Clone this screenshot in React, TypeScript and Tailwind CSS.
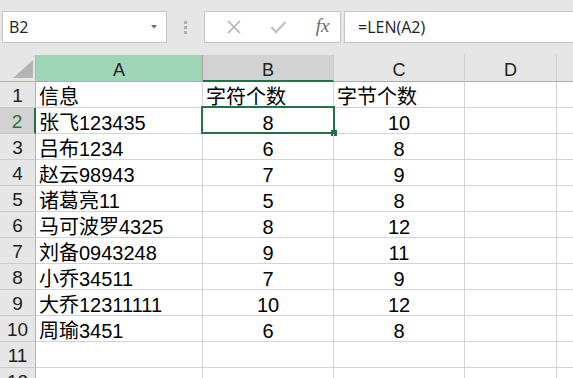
import React from "react";

const rows: [string, string, string][] = [
  ["信息", "字符个数", "字节个数"],
  ["张飞123435", "8", "10"],
  ["吕布1234", "6", "8"],
  ["赵云98943", "7", "9"],
  ["诸葛亮11", "5", "8"],
  ["马可波罗4325", "8", "12"],
  ["刘备0943248", "9", "11"],
  ["小乔34511", "7", "9"],
  ["大乔12311111", "10", "12"],
  ["周瑜3451", "6", "8"],
  ["", "", ""],
  ["", "", ""],
];

const cellFont = { fontFamily: '"Liberation Sans", "Noto Sans CJK SC", sans-serif' };

export default function App() {
  return (
    <div className="w-[573px] h-[378px] overflow-hidden bg-white relative">
      {/* Formula bar */}
      <div className="h-[55px] bg-[#e6e6e6] flex items-start pt-[11px] pl-[2px]">
        <div
          className="w-[165px] h-[32px] bg-white border border-[#c6c6c6] flex items-center justify-between pl-[6px] pr-[9px] text-[16px] text-[#222]"
          style={{ fontFamily: '"Open Sans", sans-serif' }}
        >
          <span>B2</span>
          <svg width="6" height="4" viewBox="0 0 6 4">
            <path d="M0 0 L6 0 L3 3.5 Z" fill="#6a6a6a" />
          </svg>
        </div>
        <div className="w-[37px] h-[32px] flex flex-col items-center justify-center gap-[2px]">
          <div className="w-[3px] h-[3px] bg-[#b0b0b0]" />
          <div className="w-[3px] h-[3px] bg-[#b0b0b0]" />
          <div className="w-[3px] h-[3px] bg-[#b0b0b0]" />
        </div>
        <div className="w-[137px] h-[32px] bg-white border border-[#c6c6c6] flex items-center">
          <div className="w-[45px] flex justify-center pl-[12px]">
            <svg width="16" height="16" viewBox="0 0 16 16">
              <path d="M2 2 L14 14 M14 2 L2 14" stroke="#b3b3b3" strokeWidth="1.6" />
            </svg>
          </div>
          <div className="w-[45px] flex justify-center pl-[12px]">
            <svg width="17" height="14" viewBox="0 0 17 14">
              <path d="M1.5 7 L6 12 L15.5 2" stroke="#c2c2c2" strokeWidth="2.4" fill="none" />
            </svg>
          </div>
          <div
            className="flex-1 flex justify-center pl-[10px] text-[19px] italic text-[#6b6b6b] leading-none pb-[3px]"
            style={{ fontFamily: '"Liberation Serif", serif' }}
          >
            fx
          </div>
        </div>
        <div
          className="flex-1 h-[32px] ml-[3px] bg-white border border-r-0 border-[#c6c6c6] flex items-center pl-[13px] text-[16px] text-[#222]"
          style={{ fontFamily: '"Open Sans", sans-serif' }}
        >
          =LEN(A2)
        </div>
      </div>

      {/* Grid */}
      <div className="grid grid-cols-[36px_167px_131px_131px_92px_1fr]" style={cellFont}>
        {/* header row */}
        <div className="h-[27px] bg-[#e6e6e6] border-r border-b border-[#b4b4b4] relative">
          <svg className="absolute left-[13px] top-[5px]" width="20" height="18" viewBox="0 0 20 18">
            <path d="M20 0 L20 18 L0 18 Z" fill="#b4b4b4" />
          </svg>
        </div>
        <div className="h-[27px] bg-[#9fd5b7] border-r border-b border-r-[#a6a6a6] border-b-[#adadad] flex items-end justify-center pb-[2px] text-[18px] leading-[18px] text-[#222]">
          A
        </div>
        <div className="h-[27px] bg-[#d2d2d2] border-r border-b-2 border-r-[#c8c8c8] border-b-[#217346] flex items-end justify-center pb-[1px] text-[18px] leading-[18px] text-[#222]">
          B
        </div>
        <div className="h-[27px] bg-[#e6e6e6] border-r border-b border-r-[#cfcfcf] border-b-[#adadad] flex items-end justify-center pb-[2px] text-[18px] leading-[18px] text-[#222]">
          C
        </div>
        <div className="h-[27px] bg-[#e6e6e6] border-r border-b border-r-[#cfcfcf] border-b-[#adadad] flex items-end justify-center pb-[2px] text-[18px] leading-[18px] text-[#222]">
          D
        </div>
        <div className="h-[27px] bg-[#e6e6e6] border-b border-b-[#adadad]" />

        {rows.map((r, i) => {
          const n = i + 1;
          const sel = n === 2;
          return (
            <React.Fragment key={n}>
              <div
                className={
                  sel
                    ? "h-[26px] bg-[#d2d2d2] border-r-2 border-b border-r-[#217346] border-b-[#c8c8c8] flex items-end justify-center text-[19px] leading-[19px] text-[#217346] pb-[2px]"
                    : "h-[26px] bg-[#e6e6e6] border-r border-b border-r-[#b4b4b4] border-b-[#cdcdcd] flex items-end justify-center text-[19px] leading-[19px] text-[#222] pb-[2px]"
                }
              >
                {n}
              </div>
              <div className="h-[26px] border-r border-b border-[#d4d4d4] flex items-end pl-[3px] text-[20px] leading-[20px] text-black whitespace-nowrap">
                {r[0]}
              </div>
              <div
                className={
                  (n === 1 ? "justify-start pl-[3px] " : "justify-center ") +
                  "h-[26px] border-r border-b border-[#d4d4d4] flex items-end text-[20px] leading-[20px] text-black whitespace-nowrap relative"
                }
              >
                {r[1]}
                {sel && (
                  <>
                    <div className="absolute left-[-2px] right-[-2px] top-[-2px] bottom-[-1px] border-2 border-[#217346]" />
                    <div className="absolute right-[-4px] bottom-[-3px] w-[6px] h-[6px] bg-[#217346]" />
                  </>
                )}
              </div>
              <div
                className={
                  (n === 1 ? "justify-start pl-[3px] " : "justify-center ") +
                  "h-[26px] border-r border-b border-[#d4d4d4] flex items-end text-[20px] leading-[20px] text-black whitespace-nowrap"
                }
              >
                {r[2]}
              </div>
              <div className="h-[26px] border-r border-b border-[#d4d4d4]" />
              <div className="h-[26px] border-b border-[#d4d4d4]" />
            </React.Fragment>
          );
        })}
      </div>
    </div>
  );
}
